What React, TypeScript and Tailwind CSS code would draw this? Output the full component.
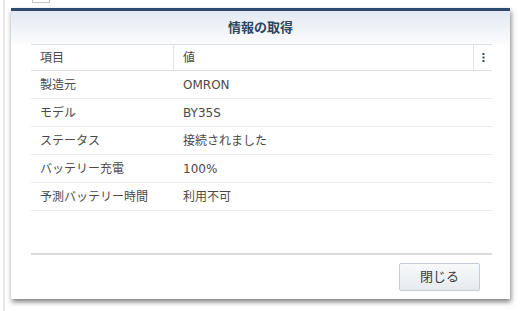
import React from "react";

const rows = [
  { label: "製造元", value: "OMRON" },
  { label: "モデル", value: "BY35S" },
  { label: "ステータス", value: "接続されました" },
  { label: "バッテリー充電", value: "100%" },
  { label: "予測バッテリー時間", value: "利用不可" },
];

const font = "font-['DejaVu_Sans','Noto_Sans_CJK_JP',sans-serif]";

export default function App() {
  return (
    <div className={`relative w-[521px] h-[311px] overflow-hidden bg-white ${font}`}>
      {/* page behind the dialog */}
      <div className="flex h-full">
        <div className="ml-[3px] h-full w-[2px] bg-[#e8e8e8]" />
        <div className="ml-[27px] h-[3px] w-[18px] border-x border-b border-[#c8c8c8]" />
      </div>

      {/* dialog */}
      <div className="absolute left-[11px] top-[8px] flex h-[291px] w-[499px] flex-col border-t-[3px] border-[#2d4b70] bg-white shadow-[1px_3px_5px_rgba(0,0,0,0.5)]">
        <div className="flex h-[33px] items-center justify-center bg-gradient-to-b from-[#e3e9f1] to-[#fbfcfd]">
          <span className="pt-[1px] text-[13px] font-bold text-[#2c4562]">情報の取得</span>
        </div>

        <div className="mx-[20px] mr-[18px] flex flex-1 flex-col text-[12px] text-[#4a4a4a]">
          <div className="flex h-[27px] items-center border-y border-[#dde1e5]">
            <div className="flex h-full w-[143px] items-center border-r border-[#e1e4e8] pl-[9px]">項目</div>
            <div className="flex h-full w-[300px] items-center border-r border-[#e1e4e8] pl-[9px]">値</div>
            <div className="flex h-full flex-1 items-center justify-center">
              <svg width="3" height="9" viewBox="0 0 3 9">
                <rect x="0.5" y="0" width="2" height="2" fill="#3d4c5e" />
                <rect x="0.5" y="3.5" width="2" height="2" fill="#3d4c5e" />
                <rect x="0.5" y="7" width="2" height="2" fill="#3d4c5e" />
              </svg>
            </div>
          </div>
          {rows.map((r) => (
            <div key={r.label} className="flex h-[28px] items-center border-b border-[#e8eaec]">
              <div className="w-[143px] pl-[9px]">{r.label}</div>
              <div className="pl-[9px]">{r.value}</div>
            </div>
          ))}
          <div className="flex-1 border-b-2 border-[#d9dcdf]" />
          <div className="flex h-[44px] items-start justify-end pt-[8px] pr-[12px]">
            <button className="h-[28px] w-[81px] rounded-[2px] border border-[#c6ccd3] bg-gradient-to-b from-[#f7f9fb] to-[#e6ebf0] text-[13px] text-[#3a3a3a]">
              閉じる
            </button>
          </div>
        </div>
      </div>
    </div>
  );
}
